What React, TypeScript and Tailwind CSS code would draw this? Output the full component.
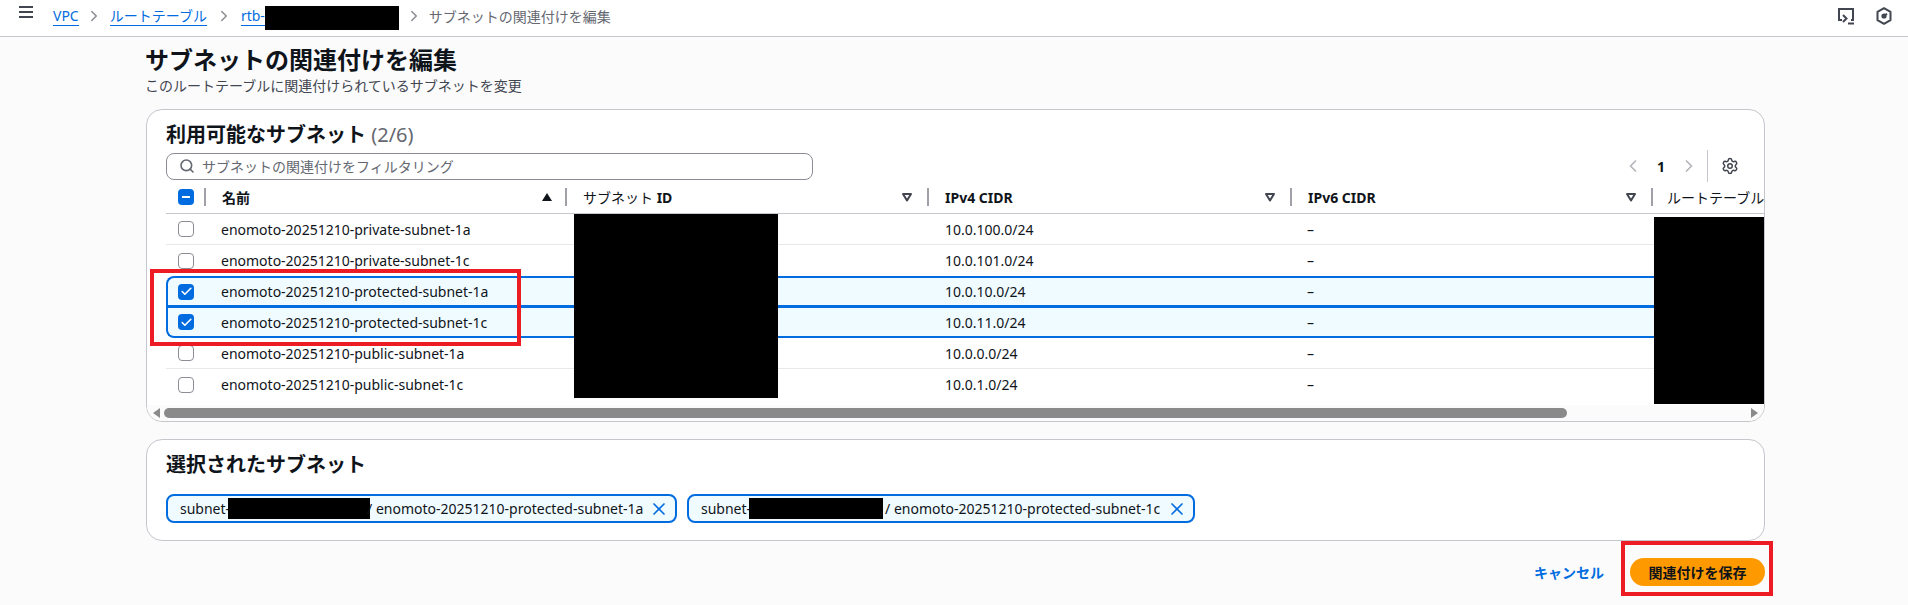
import type { ReactNode } from 'react';
import { ChevronLeft, ChevronRight, Search, Settings, X, Check } from 'lucide-react';

const rows = [
  { name: 'enomoto-20251210-private-subnet-1a', cidr: '10.0.100.0/24', selected: false },
  { name: 'enomoto-20251210-private-subnet-1c', cidr: '10.0.101.0/24', selected: false },
  { name: 'enomoto-20251210-protected-subnet-1a', cidr: '10.0.10.0/24', selected: true },
  { name: 'enomoto-20251210-protected-subnet-1c', cidr: '10.0.11.0/24', selected: true },
  { name: 'enomoto-20251210-public-subnet-1a', cidr: '10.0.0.0/24', selected: false },
  { name: 'enomoto-20251210-public-subnet-1c', cidr: '10.0.1.0/24', selected: false },
];

const SortDown = () => (
  <svg width="12" height="12" viewBox="0 0 12 12" className="shrink-0">
    <path d="M2 3h8L6 9.5z" fill="none" stroke="#424650" strokeWidth="2" strokeLinejoin="round" />
  </svg>
);

const Sep = () => <span className="block h-[18px] w-[2px] shrink-0 bg-[#a0a0a8]" />;

const HeaderCell = ({ label, width }: { label: ReactNode; width: string }) => (
  <div className={`flex shrink-0 items-center ${width}`}>
    <span className="flex-1 pl-[16px] text-[14px] font-bold whitespace-nowrap">{label}</span>
    <SortDown />
    <span className="ml-[14px]">
      <Sep />
    </span>
  </div>
);

const Box = ({ checked }: { checked: boolean }) =>
  checked ? (
    <span className="flex h-[16px] w-[16px] items-center justify-center rounded-[4px] bg-[#006ce0]">
      <Check size={13} strokeWidth={3} className="text-white" />
    </span>
  ) : (
    <span className="block h-[16px] w-[16px] rounded-[4px] border border-[#8c8c94] bg-white" />
  );

const rowStyle = (index: number) => {
  if (index === 2) return 'h-[31px] bg-[#f0fbff] border-y-2 border-l-2 border-[#006ce0] rounded-tl-[8px]';
  if (index === 3) return 'h-[32px] -mt-px bg-[#f0fbff] border-y-2 border-l-2 border-[#006ce0] rounded-bl-[8px]';
  if (index === 1 || index === 5) return 'h-[31px]';
  return 'h-[31px] border-b border-[#e8e8eb]';
};

const Row = ({ row, index }: { row: (typeof rows)[number]; index: number }) => (
  <div className={`flex items-center text-[14px] ${rowStyle(index)}`}>
    <div className={`flex w-[40px] shrink-0 justify-center ${row.selected ? '-ml-[2px]' : ''}`}>
      <Box checked={row.selected} />
    </div>
    <div className="w-[362px] shrink-0 pl-[15px] whitespace-nowrap">{row.name}</div>
    <div className="w-[361px] shrink-0" />
    <div className="w-[362px] shrink-0 pl-[16px]">{row.cidr}</div>
    <div className="w-[345px] shrink-0 pl-[16px]">–</div>
  </div>
);

const Chip = ({ name, width, cover, slash }: { name: string; width: string; cover: string; slash: string }) => (
  <div className={`flex h-[29px] items-center rounded-[8px] border-2 border-[#006ce0] bg-[#f0fbff] pl-[12px] pr-[6px] ${width}`}>
    <span className="text-[14px]">subnet-</span>
    <span className={`-ml-[2px] h-[21px] shrink-0 bg-black ${cover}`} />
    <span className={`flex-1 text-[14px] whitespace-nowrap ${slash}`}>/ {name}</span>
    <X size={20} strokeWidth={2} className="shrink-0 text-[#006ce0]" />
  </div>
);

export default function App() {
  return (
    <div
      className="relative h-[605px] w-[1908px] overflow-hidden bg-[#fbfbfc] text-[#0f141a]"
      style={{ fontFamily: '"Noto Sans", "Noto Sans CJK JP", sans-serif' }}
    >
      {/* Top bar */}
      <div className="flex h-[37px] items-center border-b border-[#c6c6cd] bg-white pb-[4px] pl-[19px] pr-[16px] text-[14px]">
        <svg width="14" height="14" viewBox="0 0 14 14" className="-mt-[8px] shrink-0">
          <path d="M0 2h14M0 7h14M0 12h14" stroke="#424650" strokeWidth="2" />
        </svg>
        <div className="ml-[20px] flex items-center">
          <a className="border-b border-[#006ce0] leading-[18px] text-[#006ce0]">VPC</a>
          <ChevronRight size={18} strokeWidth={2} className="ml-[6px] mr-[7px] text-[#8c8c94]" />
          <a className="border-b border-[#006ce0] leading-[18px] text-[#006ce0]">ルートテーブル</a>
          <ChevronRight size={18} strokeWidth={2} className="mx-[8px] text-[#8c8c94]" />
          <a className="border-b border-[#006ce0] leading-[18px] text-[#006ce0]">rtb-</a>
          <span className="mt-[4px] h-[24px] w-[134px] bg-black" />
          <ChevronRight size={18} strokeWidth={2} className="mx-[6px] text-[#8c8c94]" />
          <span className="text-[#656871]">サブネットの関連付けを編集</span>
        </div>
        <div className="ml-auto flex items-center gap-[21px]">
          <svg width="18" height="18" viewBox="0 0 18 18" fill="none" stroke="#424650" strokeWidth="2">
            <path d="M5 13H2V2h14v11h-2" />
            <path d="M5 5.5h.01M8 5.5h.01M11 5.5h.01M14 5.5h.01" strokeWidth="1.6" />
            <path d="M6 8l3.5 3.5L6 15" />
            <path d="M11 16.5h6" />
          </svg>
          <svg width="16" height="18" viewBox="0 0 16 18" fill="none" stroke="#424650" strokeWidth="2">
            <path d="M8 1.2l6.5 3.6v8.4L8 16.8l-6.5-3.6V4.8z" strokeLinejoin="round" />
            <circle cx="8" cy="9" r="2.6" fill="#424650" stroke="none" />
            <path d="M8 9l3-2.2" />
          </svg>
        </div>
      </div>

      <div className="ml-[145px] w-[1620px]">
        <h1 className="mt-[9px] text-[24px] leading-[28px] font-bold">サブネットの関連付けを編集</h1>
        <p className="mt-[2px] text-[14px] leading-[20px] text-[#424650]">このルートテーブルに関連付けられているサブネットを変更</p>

        {/* Available subnets */}
        <section className="relative mt-[13px] ml-px h-[313px] overflow-hidden rounded-[16px] border border-[#c6c6cd] bg-white">
          <div className="pl-[19px]">
            <h2 className="mt-[13px] text-[20px] leading-[24px] font-bold">
              利用可能なサブネット <span className="font-normal text-[#656871]">(2/6)</span>
            </h2>
            <div className="mt-[3px] flex items-center justify-between pr-[25px]">
              <div className="flex h-[27px] w-[647px] items-center rounded-[8px] border border-[#8c8c94] bg-white pl-[12px]">
                <Search size={16} strokeWidth={2.4} className="text-[#656871]" />
                <span className="ml-[7px] text-[14px] text-[#656871]">サブネットの関連付けをフィルタリング</span>
              </div>
              <div className="flex items-center">
                <ChevronLeft size={20} className="text-[#b4b4bb]" />
                <span className="mx-[14px] text-[14px] font-bold">1</span>
                <ChevronRight size={20} className="text-[#b4b4bb]" />
                <span className="ml-[8px] mr-[13px] h-[32px] w-px bg-[#c6c6cd]" />
                <Settings size={18} strokeWidth={2} className="text-[#424650]" />
              </div>
            </div>

            {/* Table */}
            <div className="-mt-px flex h-[33px] items-center border-b border-[#c6c6cd]">
              <div className="flex w-[38px] shrink-0 items-center pl-[12px]">
                <span className="flex h-[16px] w-[16px] items-center justify-center rounded-[4px] bg-[#006ce0]">
                  <span className="h-[2px] w-[8px] bg-white" />
                </span>
              </div>
              <Sep />
              <div className="flex w-[361px] shrink-0 items-center">
                <span className="flex-1 pl-[16px] text-[14px] font-bold">名前</span>
                <svg width="12" height="12" viewBox="0 0 12 12" className="shrink-0">
                  <path d="M1 10h10L6 2z" fill="#0f141a" />
                </svg>
                <span className="ml-[12px]">
                  <Sep />
                </span>
              </div>
              <HeaderCell
                label={
                  <>
                    <span className="font-normal">サブネット</span> ID
                  </>
                }
                width="w-[362px]"
              />
              <HeaderCell label="IPv4 CIDR" width="w-[363px]" />
              <HeaderCell label="IPv6 CIDR" width="w-[361px]" />
              <span className="pl-[14px] text-[14px] whitespace-nowrap">ルートテーブル</span>
            </div>

            {rows.map((row, i) => (
              <Row key={row.name} row={row} index={i} />
            ))}
          </div>

          {/* Horizontal scrollbar */}
          <div className="absolute inset-x-0 bottom-0 flex h-[16px] items-center bg-[#fbfbfc] px-[4px] pb-[1px]">
            <svg width="12" height="12" viewBox="0 0 12 12" className="shrink-0">
              <path d="M9 1v10L2 6z" fill="#8a8a8a" />
            </svg>
            <span className="ml-[1px] h-[10px] w-[1403px] rounded-full bg-[#8a8a8a]" />
            <svg width="12" height="12" viewBox="0 0 12 12" className="ml-auto shrink-0">
              <path d="M3 1v10l7-5z" fill="#8a8a8a" />
            </svg>
          </div>

          {/* Redacted columns */}
          <div className="absolute top-[104px] left-[427px] h-[184px] w-[204px] bg-black" />
          <div className="absolute top-[107px] left-[1507px] h-[187px] w-[110px] bg-black" />
        </section>

        {/* Selected subnets */}
        <section className="mt-[17px] ml-px h-[102px] rounded-[16px] border border-[#c6c6cd] bg-white pl-[19px] pt-[13px]">
          <h2 className="text-[20px] leading-[24px] font-bold">選択されたサブネット</h2>
          <div className="mt-[17px] flex gap-[10px]">
            <Chip name="enomoto-20251210-protected-subnet-1a" width="w-[511px]" cover="w-[142px]" slash="-ml-[3px]" />
            <Chip name="enomoto-20251210-protected-subnet-1c" width="w-[508px]" cover="w-[134px]" slash="ml-[2px]" />
          </div>
        </section>

        <div className="mt-[17px] flex items-center justify-end">
          <a className="text-[14px] font-bold text-[#006ce0]">キャンセル</a>
          <button className="ml-[26px] h-[28px] w-[135px] rounded-full bg-[#ff9900] text-[14px] font-bold text-[#0f141a]">関連付けを保存</button>
        </div>
      </div>

      {/* Red annotation boxes */}
      <div className="absolute top-[269px] left-[150px] h-[77px] w-[371px] border-[4px] border-[#ed1c24]" />
      <div className="absolute top-[541px] left-[1621px] h-[55px] w-[152px] border-[4px] border-[#ed1c24]" />
    </div>
  );
}
